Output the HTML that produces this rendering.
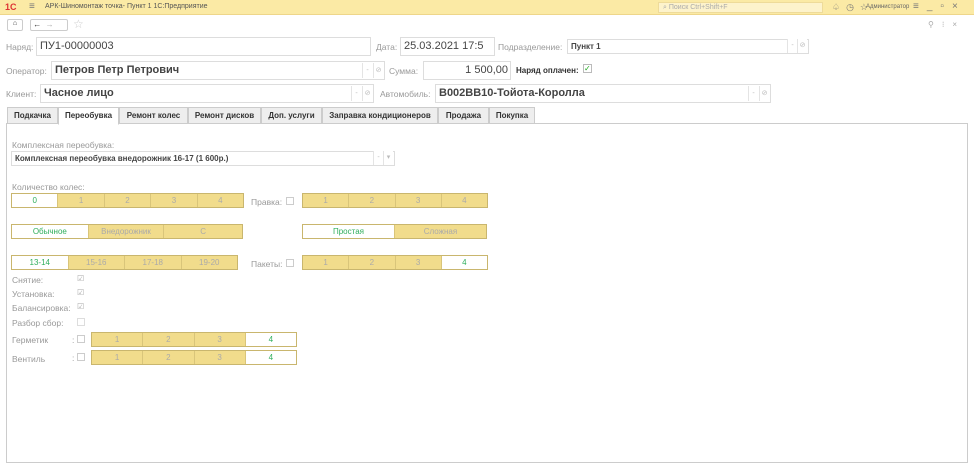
<!DOCTYPE html><html><head><meta charset="utf-8"><style>
*{box-sizing:border-box;margin:0;padding:0}
body{width:974px;height:461px;overflow:hidden;background:#fff;font-family:"Liberation Sans",sans-serif;font-size:8px;color:#888;position:relative}
.a{position:absolute}
.in{position:absolute;border:1px solid #ddd;background:#fff;color:#444;font-size:11px;padding-left:3px;line-height:17px;height:19px;white-space:nowrap;overflow:hidden}
.lb{position:absolute;color:#999;font-size:8.5px}
.tab{position:absolute;top:107px;height:17px;border:1px solid #ccc;background:#eee;color:#333;font-size:8px;font-weight:bold;text-align:center;line-height:15px}
.seg{position:absolute;display:flex;height:15px;border:1px solid #c9b66e}
.seg div{flex:1;background:#f1dc8c;border-left:1px solid #d9c57a;text-align:center;line-height:13px;color:#aaa;font-size:8px}
.seg div:first-child{border-left:none}
.seg div.w{background:#fff;color:#2fae5c}
.cb{position:absolute;width:8px;height:8px;border:1px solid #ccc;background:#fff}
.ck{position:absolute;font-size:8px;color:#aaa}
.dd{position:absolute;color:#bbb;font-size:7px;border-left:1px solid #e4e4e4;height:15px;width:10px;text-align:center;line-height:15px;background:#fff}
</style></head><body>
<div class="a" style="left:0;top:0;width:974px;height:15px;background:#fbeaa5;border-bottom:1px solid #eed68a"></div>
<div class="a" style="left:5px;top:2px;color:#d33;font-weight:bold;font-size:9px">1С</div>
<div class="a" style="left:29px;top:1px;color:#777;font-size:10px">≡</div>
<div class="a" style="left:45px;top:3px;color:#555;font-size:7px">АРК-Шиномонтаж точка- Пункт 1 1С:Предприятие</div>
<div class="a" style="left:658px;top:2px;width:165px;height:11px;background:#fdf3cc;border:1px solid #eedb9a;color:#aaa;font-size:7px;padding-left:4px;line-height:9px">⌕ Поиск Ctrl+Shift+F</div>
<div class="a" style="left:832px;top:2px;color:#777;font-size:9px;letter-spacing:6px">♤◷☆</div>
<div class="a" style="left:866px;top:4px;color:#666;font-size:6px">Администратор</div>
<div class="a" style="left:913px;top:1px;color:#777;font-size:10px;letter-spacing:8px">≡_▫×</div>
<div class="a" style="left:7px;top:19px;width:16px;height:12px;border:1px solid #ccc;border-radius:2px;font-size:7px;text-align:center;color:#333">⌂</div>
<div class="a" style="left:30px;top:19px;width:38px;height:12px;border:1px solid #ccc;border-radius:2px;font-size:8px;color:#333;line-height:10px">&nbsp;← <span style="color:#aaa">&nbsp;→</span></div>
<div class="a" style="left:73px;top:17px;color:#ccc;font-size:12px">☆</div>
<div class="a" style="left:928px;top:20px;color:#aaa;font-size:8px;letter-spacing:8px">⚲⁝×</div>
<div class="lb" style="left:6px;top:42px">Наряд:</div>
<div class="in" style="left:36px;top:37px;width:335px">ПУ1-00000003</div>
<div class="lb" style="left:376px;top:42px">Дата:</div>
<div class="in" style="left:400px;top:37px;width:95px">25.03.2021 17:5</div>
<div class="lb" style="left:498px;top:42px">Подразделение:</div>
<div class="in" style="left:567px;top:39px;width:242px;height:15px;font-size:8px;line-height:13px;font-weight:bold">Пункт 1</div>
<div class="dd" style="left:787px;top:39px;height:14px;line-height:14px">-</div><div class="dd" style="left:797px;top:39px;height:14px;line-height:14px">⊘</div>
<div class="lb" style="left:6px;top:66px">Оператор:</div>
<div class="in" style="left:51px;top:61px;width:334px;font-weight:bold">Петров Петр Петрович</div>
<div class="dd" style="left:362px;top:63px">-</div><div class="dd" style="left:373px;top:63px">⊘</div>
<div class="lb" style="left:389px;top:66px">Сумма:</div>
<div class="in" style="left:423px;top:61px;width:88px;text-align:right;padding-right:2px">1 500,00</div>
<div class="a" style="left:516px;top:66px;color:#333;font-weight:bold;font-size:8px">Наряд оплачен:</div>
<div class="a" style="left:583px;top:64px;width:9px;height:9px;border:1px solid #bbb;color:#2a2;font-size:8px;line-height:7px">✓</div>
<div class="lb" style="left:6px;top:89px">Клиент:</div>
<div class="in" style="left:40px;top:84px;width:334px;font-weight:bold">Часное лицо</div>
<div class="dd" style="left:351px;top:86px">-</div><div class="dd" style="left:362px;top:86px">⊘</div>
<div class="lb" style="left:380px;top:89px">Автомобиль:</div>
<div class="in" style="left:435px;top:84px;width:336px;font-weight:bold">В002ВВ10-Тойота-Королла</div>
<div class="dd" style="left:748px;top:86px">-</div><div class="dd" style="left:759px;top:86px">⊘</div>
<div class="a" style="left:6px;top:123px;width:962px;height:340px;border:1px solid #ccc;background:#fff"></div>
<div class="tab" style="left:7px;width:51px">Подкачка</div>
<div class="tab" style="left:58px;width:61px;background:#fff;border-bottom-color:#fff;height:18px">Переобувка</div>
<div class="tab" style="left:119px;width:69px">Ремонт колес</div>
<div class="tab" style="left:188px;width:73px">Ремонт дисков</div>
<div class="tab" style="left:261px;width:61px">Доп. услуги</div>
<div class="tab" style="left:322px;width:116px">Заправка кондиционеров</div>
<div class="tab" style="left:438px;width:51px">Продажа</div>
<div class="tab" style="left:489px;width:46px">Покупка</div>
<div class="lb" style="left:12px;top:140px">Комплексная переобувка:</div>
<div class="in" style="left:11px;top:151px;width:384px;height:15px;font-size:8px;line-height:13px;font-weight:bold">Комплексная переобувка внедорожник 16-17 (1 600р.)</div>
<div class="dd" style="left:373px;top:151px;height:14px;line-height:14px">-</div><div class="dd" style="left:383px;top:151px;height:14px;line-height:14px">▾</div>
<div class="lb" style="left:12px;top:182px">Количество колес:</div>
<div class="seg" style="left:11px;top:193px;width:233px"><div class="w">0</div><div>1</div><div>2</div><div>3</div><div>4</div></div>
<div class="lb" style="left:251px;top:197px">Правка:</div><div class="cb" style="left:286px;top:197px"></div>
<div class="seg" style="left:302px;top:193px;width:186px"><div>1</div><div>2</div><div>3</div><div>4</div></div>
<div class="seg" style="left:11px;top:224px;width:232px"><div class="w" style="flex:77">Обычное</div><div style="flex:76">Внедорожник</div><div style="flex:79">С</div></div>
<div class="seg" style="left:302px;top:224px;width:185px"><div class="w">Простая</div><div>Сложная</div></div>
<div class="seg" style="left:11px;top:255px;width:227px"><div class="w">13-14</div><div>15-16</div><div>17-18</div><div>19-20</div></div>
<div class="lb" style="left:251px;top:259px">Пакеты:</div><div class="cb" style="left:286px;top:259px"></div>
<div class="seg" style="left:302px;top:255px;width:186px"><div>1</div><div>2</div><div>3</div><div class="w">4</div></div>
<div class="lb" style="left:12px;top:275px">Снятие:</div><div class="ck" style="left:77px;top:274px">☑</div>
<div class="lb" style="left:12px;top:289px">Установка:</div><div class="ck" style="left:77px;top:288px">☑</div>
<div class="lb" style="left:12px;top:303px">Балансировка:</div><div class="ck" style="left:77px;top:302px">☑</div>
<div class="lb" style="left:12px;top:318px">Разбор сбор:</div><div class="cb" style="left:77px;top:318px;border-color:#ddd"></div>
<div class="lb" style="left:12px;top:335px">Герметик</div><div class="lb" style="left:72px;top:335px">:</div><div class="cb" style="left:77px;top:335px"></div>
<div class="seg" style="left:91px;top:332px;width:206px"><div>1</div><div>2</div><div>3</div><div class="w">4</div></div>
<div class="lb" style="left:12px;top:354px">Вентиль</div><div class="lb" style="left:72px;top:353px">:</div><div class="cb" style="left:77px;top:353px"></div>
<div class="seg" style="left:91px;top:350px;width:206px"><div>1</div><div>2</div><div>3</div><div class="w">4</div></div>
</body></html>
